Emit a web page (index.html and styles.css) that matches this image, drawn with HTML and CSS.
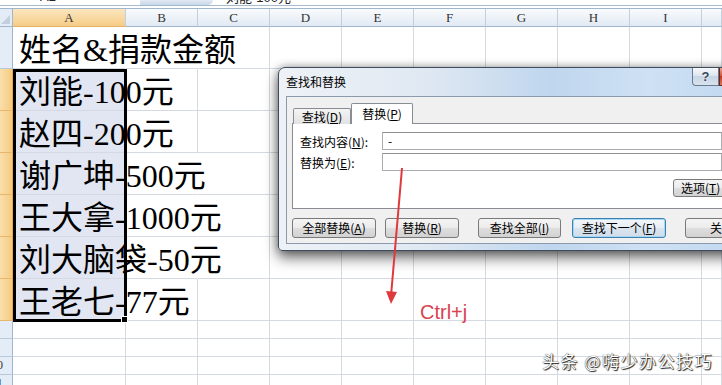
FILE: index.html
```html
<!DOCTYPE html>
<html lang="zh-CN">
<head>
    <meta charset="UTF-8">
    <title>查找和替换</title>
    <link rel="stylesheet" href="styles.css">
</head>
<body>

<div class="formula-bar">
    <div class="name-box">A2</div>
    <div class="fx-tab"></div>
    <div class="formula">刘能-100元</div>
</div>

<div class="sheet">
    <div class="corner"></div>
    <div class="ch sel">A</div><div class="ch">B</div><div class="ch">C</div><div class="ch">D</div><div class="ch">E</div><div class="ch">F</div><div class="ch">G</div><div class="ch">H</div><div class="ch">I</div><div class="ch"></div>

    <div class="rh"><span>1</span></div>
    <div class="c t spill">姓名&amp;捐款金额</div><div class="c spill"></div><div class="c"></div><div class="c"></div><div class="c"></div><div class="c"></div><div class="c"></div><div class="c"></div><div class="c"></div><div class="c"></div>

    <div class="rh sel"><span>2</span></div>
    <div class="c t pick">刘能-100元</div><div class="c"></div><div class="c"></div><div class="c"></div><div class="c"></div><div class="c"></div><div class="c"></div><div class="c"></div><div class="c"></div><div class="c"></div>

    <div class="rh sel"><span>3</span></div>
    <div class="c t pick">赵四-200元</div><div class="c"></div><div class="c"></div><div class="c"></div><div class="c"></div><div class="c"></div><div class="c"></div><div class="c"></div><div class="c"></div><div class="c"></div>

    <div class="rh sel"><span>4</span></div>
    <div class="c t pick">谢广坤-500元</div><div class="c spill"></div><div class="c"></div><div class="c"></div><div class="c"></div><div class="c"></div><div class="c"></div><div class="c"></div><div class="c"></div><div class="c"></div>

    <div class="rh sel"><span>5</span></div>
    <div class="c t pick">王大拿-1000元</div><div class="c spill"></div><div class="c"></div><div class="c"></div><div class="c"></div><div class="c"></div><div class="c"></div><div class="c"></div><div class="c"></div><div class="c"></div>

    <div class="rh sel"><span>6</span></div>
    <div class="c t pick">刘大脑袋-50元</div><div class="c spill"></div><div class="c"></div><div class="c"></div><div class="c"></div><div class="c"></div><div class="c"></div><div class="c"></div><div class="c"></div><div class="c"></div>

    <div class="rh sel"><span>7</span></div>
    <div class="c t pick">王老七-77元</div><div class="c"></div><div class="c"></div><div class="c"></div><div class="c"></div><div class="c"></div><div class="c"></div><div class="c"></div><div class="c"></div><div class="c"></div>

    <div class="rh"><span>8</span></div>
    <div class="c"></div><div class="c"></div><div class="c"></div><div class="c"></div><div class="c"></div><div class="c"></div><div class="c"></div><div class="c"></div><div class="c"></div><div class="c"></div>

    <div class="rh"><span>9</span></div>
    <div class="c"></div><div class="c"></div><div class="c"></div><div class="c"></div><div class="c"></div><div class="c"></div><div class="c"></div><div class="c"></div><div class="c"></div><div class="c"></div>

    <div class="rh"><span>10</span></div>
    <div class="c"></div><div class="c"></div><div class="c"></div><div class="c"></div><div class="c"></div><div class="c"></div><div class="c"></div><div class="c"></div><div class="c"></div><div class="c"></div>

    <div class="rh"><span>11</span></div>
    <div class="c"></div><div class="c"></div><div class="c"></div><div class="c"></div><div class="c"></div><div class="c"></div><div class="c"></div><div class="c"></div><div class="c"></div><div class="c"></div>

    <div class="selection"></div>
</div>

<div class="dialog">
    <div class="titlebar">查找和替换</div>
    <div class="caption-btns">
        <div class="cap-help">?</div>
        <div class="cap-close"></div>
    </div>
    <div class="dlg-body">
        <div class="tabs">
            <div class="tab">查找(<u>D</u>)</div>
            <div class="tab on">替换(<u>P</u>)</div>
        </div>
        <div class="panel">
            <div class="field">
                <label>查找内容(<u>N</u>):</label>
                <div class="box">-</div>
            </div>
            <div class="field">
                <label>替换为(<u>E</u>):</label>
                <div class="box"></div>
            </div>
            <div class="opt-row">
                <div class="btn opt">选项(<u>T</u>) &gt;&gt;</div>
            </div>
        </div>
        <div class="actions">
            <div class="btn b1">全部替换(<u>A</u>)</div>
            <div class="btn b2">替换(<u>R</u>)</div>
            <div class="btn b3">查找全部(<u>I</u>)</div>
            <div class="btn b4 default">查找下一个(<u>F</u>)</div>
            <div class="btn b5">关闭</div>
        </div>
    </div>
</div>

<svg class="arrow" width="722" height="385" viewBox="0 0 722 385">
    <line x1="402" y1="168" x2="391" y2="296" stroke="#e0393d" stroke-width="2"/>
    <polygon points="386,291 397,292 391,304" fill="#e0393d"/>
</svg>

<div class="hint">Ctrl+j</div>
<div class="watermark">头条 @嗨少办公技巧</div>

</body>
</html>
```

FILE: styles.css
```css
body {
    margin: 0;
    width: 722px;
    height: 385px;
    overflow: hidden;
    position: relative;
    background: #fff;
    font-family: "Noto Sans CJK SC", sans-serif;
}

/* formula bar, mostly scrolled off the top */
.formula-bar {display:flex; height:5px; border-bottom:1px solid #a5b9cf; overflow:hidden; font:13px/13px "Liberation Sans","Noto Sans CJK SC",sans-serif; color:#222}
.name-box {width:140px; padding-left:40px; box-sizing:border-box; margin-top:-10px}
.fx-tab {width:73px; background:linear-gradient(#e2eaf4,#c7d6e9); border-radius:0 0 6px 0}
.formula {padding-left:13px; margin-top:-9px}

/* worksheet */
.sheet {
    display: grid;
    grid-template-columns: 13px 113px repeat(8, 72px) 1fr;
    grid-template-rows: 18px repeat(7, 42px) repeat(4, 18px);
    margin-top: 2px;
    border-top: 1px solid #9eb6ce;
    position: relative;
}
.corner {background:#e4ecf7; border-right:1px solid #9eb6ce; border-bottom:1px solid #9eb6ce; position:relative}
.corner::after {content:""; position:absolute; right:2px; bottom:2px; border-style:solid; border-width:0 0 9px 9px; border-color:transparent transparent #c3cfdd transparent}
.ch {background:linear-gradient(#f9fbfd,#e1e9f3); border-right:1px solid #c2cfdd; border-bottom:1px solid #9eb6ce; font:13px/17px "Liberation Serif",serif; color:#333; text-align:center}
.ch.sel {background:linear-gradient(#fbe6bf,#f6cc86); border-bottom-color:#e6b162}
.rh {background:#e4ecf7; border-right:1px solid #9eb6ce; border-bottom:1px solid #b9c9da; font:12px "Liberation Serif",serif; color:#333; overflow:hidden; display:flex; align-items:center; justify-content:center}
.rh span {margin-left:-18px}
.rh.sel {background:linear-gradient(90deg,#fadfae,#f6ca7e); border-bottom-color:#e6b66c; border-right-color:#e2a955}

.c {border-right:1px solid #d5dae2; border-bottom:1px solid #d5dae2}
.c.spill {border-right-color:transparent}
.c.pick {background:#e1e6f2}
.t {
    font: 32px/36px "Liberation Serif", "Noto Sans CJK SC", serif;
    color: #000;
    white-space: nowrap;
    padding-left: 6px;
    display: flex;
    align-items: flex-end;
    position: relative;
    z-index: 1;
}
.selection {position:absolute; grid-column:2 / 3; grid-row:3 / 9; top:0; left:0; right:-1px; bottom:-1px; border:3px solid #000; z-index:2}
.selection::after {content:""; position:absolute; right:-4px; bottom:-4px; width:5px; height:5px; background:#000; border:1px solid #fff}

/* find & replace dialog */
.dialog {
    position: absolute;
    left: 278px;
    top: 67px;
    width: 480px;
    padding: 0 7px 6px;
    border: 1px solid #3e4c5e;
    border-radius: 7px 7px 4px 4px;
    background: linear-gradient(90deg, #eef2f7 0%, #dfe8f2 30%, #bfd6ee 55%, #cfe1f4 75%, #bcd5ee 100%);
    box-shadow: 0 7px 14px rgba(0,0,0,.55), 0 0 8px rgba(0,0,0,.35);
    z-index: 5;
    font: 12px "Noto Sans CJK SC", sans-serif;
    color: #000;
}
.titlebar {height:28px; line-height:28px}
.caption-btns {position:absolute; top:0; left:413px; display:flex}
.cap-help {width:27px; height:18px; box-sizing:border-box; border:1px solid #6b7a8f; border-top:none; border-radius:0 0 0 4px; background:linear-gradient(#f5f8fb,#dde6f0 45%,#c8d5e4 50%,#d8e3ef); font:bold 13px/17px "Liberation Sans",sans-serif; color:#3a4656; text-align:center; text-shadow:0 0 2px #fff}
.cap-close {width:43px; height:18px; box-sizing:border-box; border:1px solid #6b2a1e; border-top:none; background:linear-gradient(#e9a592,#d1543c 45%,#c2391f 50%,#d9775b)}

.dlg-body {height:148px; box-sizing:border-box; border:1px solid #8b9aac; background:#f0f0f0; padding:6px 0 0 5px}
.tabs {display:flex; align-items:flex-end; height:21px; padding-left:1px; position:relative; z-index:1}
.tab {width:58px; height:16px; box-sizing:border-box; border:1px solid #898c95; border-bottom:none; border-radius:2px 2px 0 0; background:linear-gradient(#f4f4f4,#e2e2e2); text-align:center; line-height:15px}
.tab.on {width:62px; height:21px; background:#fff; line-height:19px}
.panel {margin-top:-1px; height:86px; box-sizing:border-box; border:1px solid #898c95; background:#fff; padding:8px 0 0 7px}
.field {display:flex; align-items:center; height:18px; margin-bottom:3px}
.field label {width:82px; flex:none}
.box {width:340px; height:18px; flex:none; box-sizing:border-box; border:1px solid #abadb3; border-top-color:#8e8f8f; padding-left:5px; line-height:15px}
.opt-row {margin-top:8px; padding-left:373px}

.btn {height:20px; box-sizing:border-box; border:1px solid #7a7a7a; border-radius:3px; background:linear-gradient(#f4f4f4 0%,#ececec 48%,#dedede 52%,#d2d2d2 100%); text-align:center; line-height:18px; flex:none}
.btn.opt {width:75px; height:18px; line-height:16px; text-align:left; padding-left:7px}
.btn.default {border-color:#3c7fb1; box-shadow:inset 0 0 0 1px #a6d8f3; background:linear-gradient(#f1f6fa,#e6eef5 48%,#d9e4ee 52%,#d0dde9)}
.actions {display:flex; margin-top:9px}
.b1 {width:84px}
.b2 {width:74px; margin-left:9px}
.b3 {width:83px; margin-left:19px}
.b4 {width:94px; margin-left:11px}
.b5 {width:74px; margin-left:19px}

/* annotations over the screenshot */
.arrow {position:absolute; left:0; top:0; z-index:6}
.hint {position:absolute; left:420px; top:302px; font:20px/20px "Liberation Sans",sans-serif; color:#d9424f; z-index:6}
.watermark {position:absolute; left:542px; top:352px; font:17px/17px "Noto Sans CJK SC",sans-serif; letter-spacing:1.5px; color:#fff; text-shadow:1px 1px 1px rgba(0,0,0,.85), 0 0 1px #000; z-index:6}
```
